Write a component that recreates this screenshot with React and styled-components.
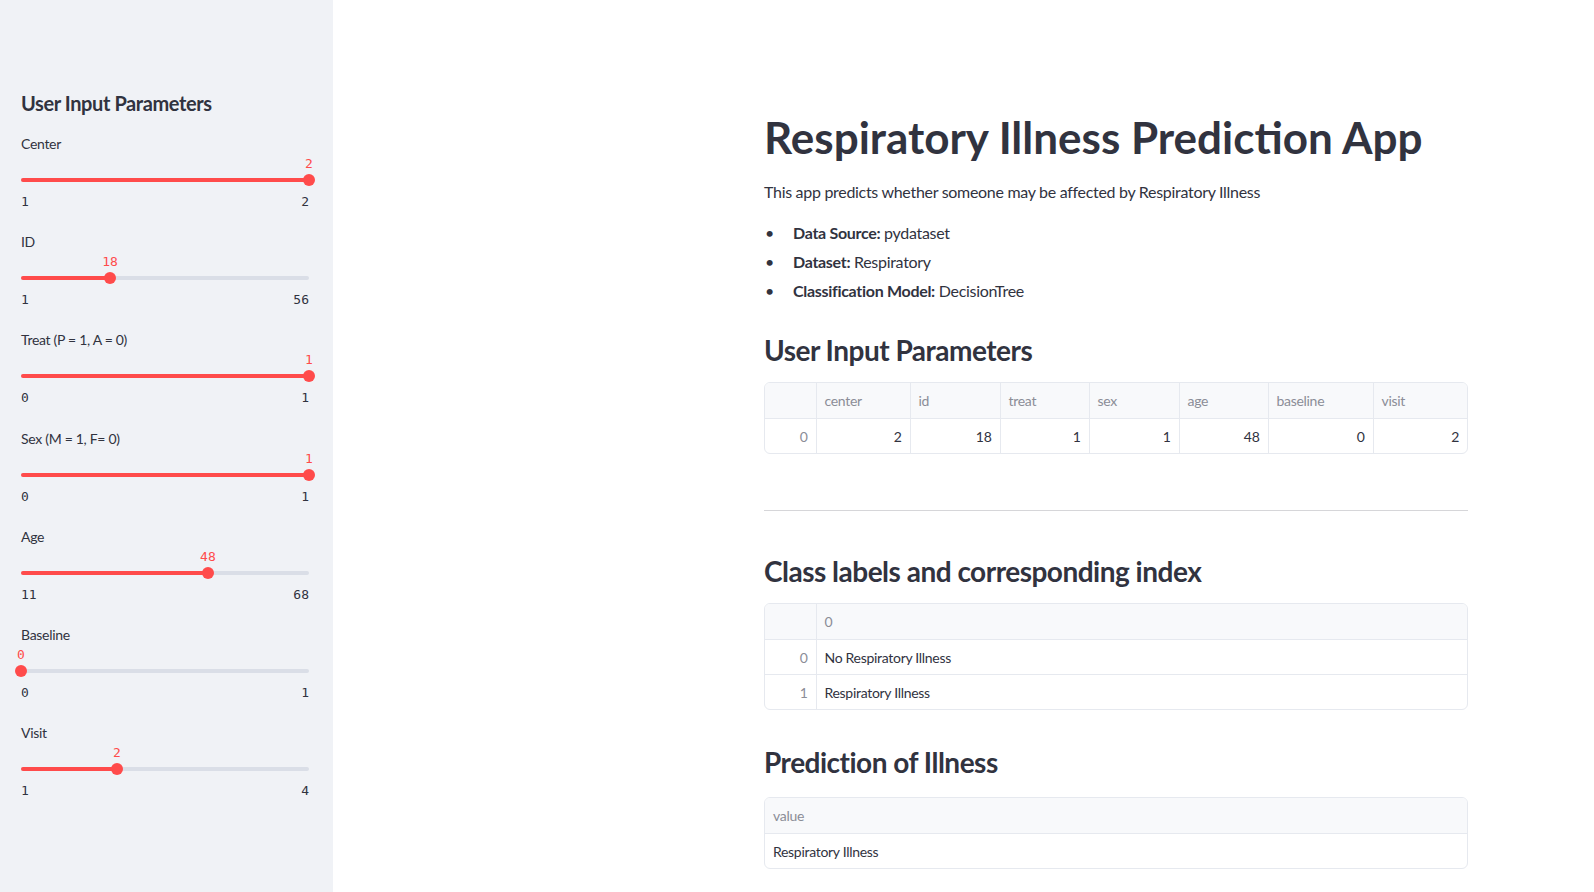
import React from 'react';
import styled, { createGlobalStyle } from 'styled-components';

const GlobalStyle = createGlobalStyle`
    html, body {
        margin: 0;
        padding: 0;
        background: #ffffff;
    }
    body {
        font-family: Lato, "Noto Sans", sans-serif;
        color: #31333f;
    }
`;

const Page = styled.div`
    display: flex;
    min-height: 892px;
`;

const Sidebar = styled.aside`
    width: 333px;
    flex-shrink: 0;
    background-color: #f0f2f6;
    padding: 89px 24px 0 21px;
    box-sizing: border-box;
`;

const SidebarTitle = styled.h2`
    margin: 0 0 17px;
    font-size: 20px;
    line-height: 28px;
    font-weight: 700;
    letter-spacing: -0.4px;
`;

const SliderBlock = styled.div`
    margin-bottom: 20.2px;
`;

const SliderLabel = styled.div`
    font-size: 14px;
    line-height: 20px;
    letter-spacing: -0.3px;
`;

const SliderArea = styled.div`
    position: relative;
    height: 32px;
`;

const Rail = styled.div`
    position: absolute;
    left: 0;
    right: 0;
    top: 24px;
    height: 4px;
    border-radius: 2px;
    background-color: #dadee7;
`;

const Fill = styled.div`
    position: absolute;
    left: 0;
    top: 0;
    bottom: 0;
    border-radius: 2px;
    background-color: #ff4b4b;
`;

const Thumb = styled.div`
    position: absolute;
    top: 20px;
    width: 12px;
    height: 12px;
    margin-left: -6px;
    border-radius: 50%;
    background-color: #ff4b4b;
`;

const ThumbValue = styled.div`
    position: absolute;
    top: 2px;
    transform: translateX(-50%);
    font-family: "DejaVu Sans Mono", "Liberation Mono", monospace;
    font-size: 13px;
    line-height: 16px;
    color: #ff4b4b;
    white-space: nowrap;
`;

const Bounds = styled.div`
    display: flex;
    justify-content: space-between;
    margin-top: 6px;
    font-family: "DejaVu Sans Mono", "Liberation Mono", monospace;
    font-size: 13px;
    line-height: 20px;
`;

const Main = styled.main`
    flex: 1;
    padding: 109px 0 0 431px;
`;

const Content = styled.div`
    width: 704px;
`;

const Title = styled.h1`
    margin: 0;
    font-size: 44px;
    line-height: 56px;
    font-weight: 700;
`;

const Lead = styled.p`
    margin: 15px 0 0;
    font-size: 16px;
    line-height: 24px;
    letter-spacing: -0.3px;
`;

const Facts = styled.ul`
    margin: 17px 0 0;
    padding: 0;
    list-style: none;
    font-size: 16px;
    line-height: 24px;
    letter-spacing: -0.3px;

    li::before {
        content: '•';
        display: inline-block;
        width: 29px;
        padding-left: 1px;
        box-sizing: border-box;
    }

    li + li {
        margin-top: 5px;
    }
`;

const Heading = styled.h3`
    margin: ${(p) => p.$top}px 0 0;
    font-size: 28px;
    line-height: 36px;
    font-weight: 700;
    letter-spacing: -0.5px;
`;

const TableFrame = styled.div`
    margin-top: ${(p) => p.$top}px;
    border: 1px solid #e6e9ef;
    border-radius: 6px;
    overflow: hidden;
`;

const Table = styled.table`
    width: 100%;
    border-collapse: collapse;
    table-layout: fixed;
    font-size: 14px;
    letter-spacing: -0.3px;
`;

const HeadCell = styled.th`
    height: 35px;
    padding: 0 8px;
    background-color: #f8f9fb;
    color: #8b8d97;
    font-weight: 400;
    text-align: left;
    border-right: 1px solid #e6e9ef;
    border-bottom: 1px solid #e6e9ef;
    &:last-child {
        border-right: none;
    }
`;

const Cell = styled.td`
    height: 34px;
    padding: 0 8px;
    text-align: ${(p) => (p.$num ? 'right' : 'left')};
    color: ${(p) => (p.$index ? '#8b8d97' : '#31333f')};
    border-right: 1px solid #e6e9ef;
    border-bottom: 1px solid #e6e9ef;
    &:last-child {
        border-right: none;
    }
    tr:last-child & {
        border-bottom: none;
    }
`;

const Rule = styled.hr`
    margin: 56px 0 0;
    border: none;
    border-top: 1px solid #d6d6d9;
`;

const sliders = [
    { label: 'Center', min: 1, max: 2, value: 2 },
    { label: 'ID', min: 1, max: 56, value: 18 },
    { label: 'Treat (P = 1, A = 0)', min: 0, max: 1, value: 1 },
    { label: 'Sex (M = 1, F= 0)', min: 0, max: 1, value: 1 },
    { label: 'Age', min: 11, max: 68, value: 48 },
    { label: 'Baseline', min: 0, max: 1, value: 0 },
    { label: 'Visit', min: 1, max: 4, value: 2 },
];

const params = [
    { key: 'center', value: 2, width: 94 },
    { key: 'id', value: 18, width: 90 },
    { key: 'treat', value: 1, width: 89 },
    { key: 'sex', value: 1, width: 90 },
    { key: 'age', value: 48, width: 89 },
    { key: 'baseline', value: 0, width: 105 },
    { key: 'visit', value: 2 },
];

const Slider = ({ label, min, max, value }) => {
    const pct = ((value - min) / (max - min)) * 100;
    return (
        <SliderBlock>
            <SliderLabel>{label}</SliderLabel>
            <SliderArea>
                <ThumbValue style={{ left: `${pct}%` }}>{value}</ThumbValue>
                <Rail>
                    <Fill style={{ width: `${pct}%` }} />
                </Rail>
                <Thumb style={{ left: `${pct}%` }} />
            </SliderArea>
            <Bounds>
                <span>{min}</span>
                <span>{max}</span>
            </Bounds>
        </SliderBlock>
    );
};

const App = () => {
    return (
        <Page>
            <GlobalStyle />
            <Sidebar>
                <SidebarTitle>User Input Parameters</SidebarTitle>
                {sliders.map((s) => (
                    <Slider key={s.label} {...s} />
                ))}
            </Sidebar>
            <Main>
                <Content>
                    <Title>Respiratory Illness Prediction App</Title>
                    <Lead>This app predicts whether someone may be affected by Respiratory Illness</Lead>
                    <Facts>
                        <li><b>Data Source:</b> pydataset</li>
                        <li><b>Dataset:</b> Respiratory</li>
                        <li><b>Classification Model:</b> DecisionTree</li>
                    </Facts>

                    <Heading $top={29}>User Input Parameters</Heading>
                    <TableFrame $top={14}>
                        <Table>
                            <colgroup>
                                <col style={{ width: 51 }} />
                                {params.map((p) => (
                                    <col key={p.key} style={p.width ? { width: p.width } : undefined} />
                                ))}
                            </colgroup>
                            <thead>
                                <tr>
                                    <HeadCell />
                                    {params.map((p) => (
                                        <HeadCell key={p.key}>{p.key}</HeadCell>
                                    ))}
                                </tr>
                            </thead>
                            <tbody>
                                <tr>
                                    <Cell $num $index>0</Cell>
                                    {params.map((p) => (
                                        <Cell key={p.key} $num>{p.value}</Cell>
                                    ))}
                                </tr>
                            </tbody>
                        </Table>
                    </TableFrame>

                    <Rule />

                    <Heading $top={42}>Class labels and corresponding index</Heading>
                    <TableFrame $top={14}>
                        <Table>
                            <colgroup>
                                <col style={{ width: 51 }} />
                                <col />
                            </colgroup>
                            <thead>
                                <tr>
                                    <HeadCell />
                                    <HeadCell>0</HeadCell>
                                </tr>
                            </thead>
                            <tbody>
                                <tr>
                                    <Cell $num $index>0</Cell>
                                    <Cell>No Respiratory Illness</Cell>
                                </tr>
                                <tr>
                                    <Cell $num $index>1</Cell>
                                    <Cell>Respiratory Illness</Cell>
                                </tr>
                            </tbody>
                        </Table>
                    </TableFrame>

                    <Heading $top={34}>Prediction of Illness</Heading>
                    <TableFrame $top={17}>
                        <Table>
                            <thead>
                                <tr>
                                    <HeadCell>value</HeadCell>
                                </tr>
                            </thead>
                            <tbody>
                                <tr>
                                    <Cell>Respiratory Illness</Cell>
                                </tr>
                            </tbody>
                        </Table>
                    </TableFrame>
                </Content>
            </Main>
        </Page>
    );
};

export default App;
